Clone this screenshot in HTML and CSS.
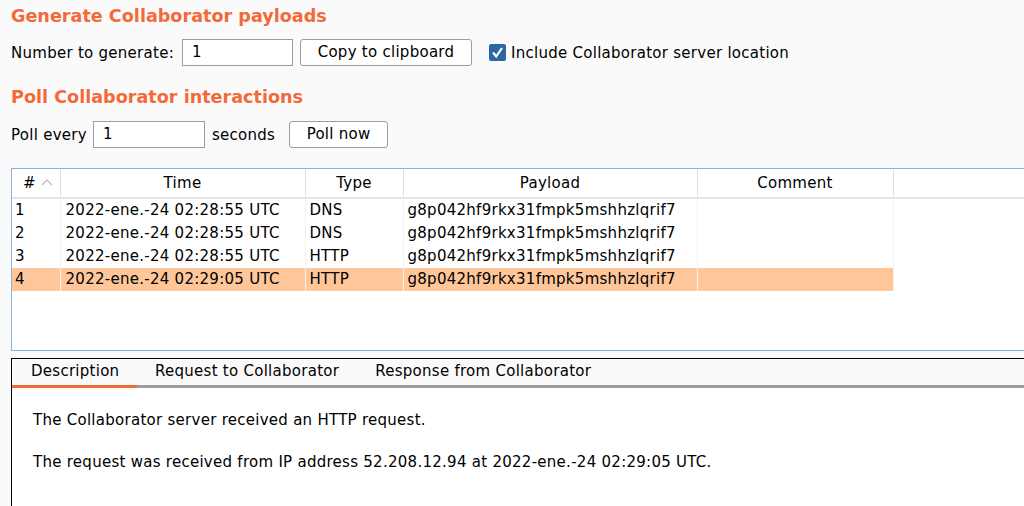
FILE: index.html
```html
<!DOCTYPE html>
<html>
<head>
<meta charset="utf-8">
<link rel="stylesheet" href="styles.css">
</head>
<body>
<div class="page">
  <h2 class="title">Generate Collaborator payloads</h2>
  <div class="row row-gen">
    <span class="label">Number to generate:</span>
    <div class="input input-gen">1</div>
    <div class="btn btn-copy">Copy to clipboard</div>
    <label class="check">
      <span class="box"><svg width="17" height="17" viewBox="0 0 17 17"><path d="M4 8.5 L7.2 12.5 L13 4" fill="none" stroke="#fff" stroke-width="2.2"/></svg></span>
      <span>Include Collaborator server location</span>
    </label>
  </div>
  <h2 class="title title-poll">Poll Collaborator interactions</h2>
  <div class="row row-poll">
    <span class="label">Poll every</span>
    <div class="input input-poll">1</div>
    <span class="label">seconds</span>
    <div class="btn btn-poll">Poll now</div>
  </div>

  <div class="table-wrap">
    <table class="grid">
      <colgroup>
        <col class="c-num"><col class="c-time"><col class="c-type"><col class="c-payload"><col class="c-comment"><col class="c-fill">
      </colgroup>
      <thead>
        <tr>
          <th><span class="hash"># <svg class="sort" width="12" height="8" viewBox="0 0 12 8"><path d="M1 7 L6 2 L11 7" fill="none" stroke="#b8b8b8" stroke-width="1.2"/></svg></span></th>
          <th>Time</th><th>Type</th><th>Payload</th><th>Comment</th><th class="fill"></th>
        </tr>
      </thead>
      <tbody>
        <tr><td>1</td><td>2022-ene.-24 02:28:55 UTC</td><td>DNS</td><td>g8p042hf9rkx31fmpk5mshhzlqrif7</td><td></td><td class="fill"></td></tr>
        <tr><td>2</td><td>2022-ene.-24 02:28:55 UTC</td><td>DNS</td><td>g8p042hf9rkx31fmpk5mshhzlqrif7</td><td></td><td class="fill"></td></tr>
        <tr><td>3</td><td>2022-ene.-24 02:28:55 UTC</td><td>HTTP</td><td>g8p042hf9rkx31fmpk5mshhzlqrif7</td><td></td><td class="fill"></td></tr>
        <tr class="sel"><td>4</td><td>2022-ene.-24 02:29:05 UTC</td><td>HTTP</td><td>g8p042hf9rkx31fmpk5mshhzlqrif7</td><td></td><td class="fill"></td></tr>
      </tbody>
    </table>
  </div>

  <div class="tabs">
    <div class="tabbar">
      <div class="tab active">Description</div>
      <div class="tab">Request to Collaborator</div>
      <div class="tab">Response from Collaborator</div>
      <div class="tab-rest"></div>
    </div>
    <div class="tab-body">
      <p>The Collaborator server received an HTTP request.</p>
      <p>The request was received from IP address 52.208.12.94 at 2022-ene.-24 02:29:05 UTC.</p>
    </div>
  </div>
</div>
</body>
</html>
```

FILE: styles.css
```css
html, body {
  margin: 0;
  padding: 0;
  background: #fafafa;
  overflow: hidden;
}
body {
  width: 1024px;
  height: 506px;
  font-family: "DejaVu Sans", sans-serif;
  font-size: 15px;
  letter-spacing: 0.27px;
  color: #000;
}
.page {
  padding-left: 11px;
  display: flex;
  flex-direction: column;
  height: 506px;
  box-sizing: border-box;
}
.title {
  margin: 0;
  font-size: 17.6px;
  letter-spacing: 0;
  font-weight: bold;
  color: #f26a3a;
  line-height: 20px;
  height: 20px;
  margin-top: 6px;
}
.title-poll {
  margin-top: 21px;
}
.row {
  display: flex;
  align-items: center;
  height: 27px;
}
.row-gen {
  margin-top: 13px;
}
.row-poll {
  margin-top: 14px;
}
.label {
  white-space: nowrap;
}
.input {
  box-sizing: border-box;
  height: 27px;
  border: 1px solid #9c9aac;
  background: #fff;
  padding-left: 9px;
  line-height: 25px;
}
.input-gen {
  width: 111px;
  margin-left: 8px;
}
.input-poll {
  width: 112px;
  margin-left: 6px;
  margin-right: 7px;
}
.btn {
  box-sizing: border-box;
  height: 27px;
  border: 1px solid #9c9aac;
  border-radius: 3px;
  background: #fff;
  text-align: center;
  line-height: 25px;
}
.btn-copy {
  width: 172px;
  margin-left: 7px;
}
.btn-poll {
  width: 99px;
  margin-left: 14px;
}
.check {
  display: flex;
  align-items: center;
  margin-left: 17px;
  gap: 5px;
}
.box {
  width: 17px;
  height: 17px;
  background: #2c67a3;
  border-radius: 2px;
  display: block;
}
.box svg { display: block; }

.table-wrap {
  margin-top: 20px;
  height: 183px;
  flex: none;
  box-sizing: border-box;
  border: 1px solid #8eafd6;
  border-right: none;
  background: #fff;
  width: 1013px;
}
.grid {
  border-collapse: collapse;
  table-layout: fixed;
  width: 1012px;
}
.c-num { width: 48px; }
.c-time { width: 245px; }
.c-type { width: 98px; }
.c-payload { width: 294px; }
.c-comment { width: 196px; }
.c-fill { width: 131px; }
th {
  font-weight: normal;
  height: 28px;
  padding: 0;
  border-bottom: 2px solid #e4e4e4;
  text-align: center;
  background: #fff;
}
th + th {
  background-image: linear-gradient(#ddd, #ddd);
  background-size: 1px 26px;
  background-repeat: no-repeat;
  background-position: left center;
}
th:first-child {
  text-align: left;
  padding-left: 11px;
}
.hash { display: inline-flex; align-items: center; gap: 5px; }
.sort { display: block; margin-top: -2px; }
td {
  height: 23px;
  padding: 0 0 0 4px;
  white-space: nowrap;
  border-left: 1px solid #f3f3f3;
  line-height: 23px;
}
td:first-child { border-left: none; padding-left: 3px; }
td:nth-child(2) { padding-left: 5px; }
td.fill { background: #fff; }
tr.sel td { background: #ffc699; }
tr.sel td.fill { background: #fff; }

.tabs {
  margin-top: 7px;
  flex: 1;
  min-height: 0;
  overflow: hidden;
  border-top: 1px solid #000;
  border-left: 1px solid #000;
  background: #fff;
}
.tabbar {
  display: flex;
  height: 29px;
  background: #fafafa;
}
.tab {
  box-sizing: border-box;
  height: 29px;
  line-height: 25px;
  border-bottom: 3px solid #9d9d9d;
  padding: 0 18px;
  white-space: nowrap;
}
.tab.active {
  border-bottom-color: #f06a3a;
  width: 125px;
  padding-left: 19px;
}
.tab-rest {
  flex: 1;
  border-bottom: 3px solid #9d9d9d;
}
.tab-body {
  padding: 21px 0 0 21px;
}
.tab-body p {
  margin: 0 0 19px 0;
  line-height: 23px;
}
```
